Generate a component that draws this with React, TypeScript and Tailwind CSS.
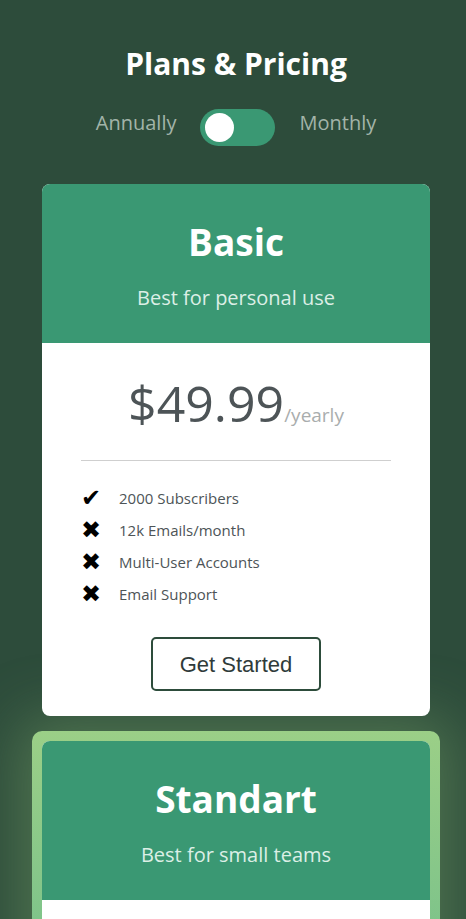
import { useState } from "react"

type Feature = { label: string; included: boolean }

const basicFeatures: Feature[] = [
  { label: "2000 Subscribers", included: true },
  { label: "12k Emails/month", included: false },
  { label: "Multi-User Accounts", included: false },
  { label: "Email Support", included: false },
]

function CardHeader({ name, tagline }: { name: string; tagline: string }) {
  return (
    <div className="flex h-[159px] flex-col items-center bg-[#3a9873] pt-[33px]">
      <h2 className="text-[37px] leading-[50px] font-bold text-white">{name}</h2>
      <p className="mt-[17px] text-[20px] leading-[28px] text-[#dcefe6]">{tagline}</p>
    </div>
  )
}

export default function App() {
  const [monthly, setMonthly] = useState(false)

  return (
    <div className="h-[919px] overflow-hidden bg-[#2d4c3b] pl-[6px] font-['Open_Sans',sans-serif]">
      <div className="flex flex-col items-center pt-[44px]">
        <h1 className="text-[30px] leading-[40px] font-bold text-white">Plans &amp; Pricing</h1>

        <div className="mt-[24px] flex items-center">
          <span className="mb-[8px] text-[20px] text-[#a3b4a9]">Annually</span>
          <button
            onClick={() => setMonthly((m) => !m)}
            className="mx-[24px] flex h-[37px] w-[75px] items-center rounded-full bg-[#3a9873] px-[5px]"
            aria-label="Toggle billing"
          >
            <span
              className={`h-[29px] w-[29px] rounded-full bg-white transition-transform ${
                monthly ? "translate-x-[36px]" : "translate-x-0"
              }`}
            />
          </button>
          <span className="mb-[8px] text-[20px] text-[#a3b4a9]">Monthly</span>
        </div>
      </div>

      <div className="mt-[38px] flex flex-col items-center">
        <div className="relative z-10 w-[388px] overflow-hidden rounded-[8px] bg-white">
          <CardHeader name="Basic" tagline="Best for personal use" />
          <div className="flex flex-col items-center pb-[25px]">
            <div className="mt-[29px] flex items-baseline text-[#4d5457]">
              <span className="text-[50px] leading-[62px]">$49.99</span>
              <span className="text-[19px] text-[#a9adad]">/yearly</span>
            </div>
            <div className="mt-[26px] h-px w-[310px] bg-[#cfcfcf]" />
            <ul className="mt-[26px] flex w-[310px] flex-col gap-[10px]">
              {basicFeatures.map((f) => (
                <li key={f.label} className="flex h-[22px] items-center">
                  <span className="w-[38px] font-['DejaVu_Sans',sans-serif] text-[24px] leading-none text-black">
                    {f.included ? "✔" : "✖"}
                  </span>
                  <span className="text-[15px] text-[#4d5457]">{f.label}</span>
                </li>
              ))}
            </ul>
            <button className="mt-[32px] h-[54px] w-[170px] rounded-[5px] border-2 border-[#2d4c3b] bg-white font-['Liberation_Sans',sans-serif] text-[22px] text-[#2f3b3a]">
              Get Started
            </button>
          </div>
        </div>

        <div className="mt-[15px] rounded-[10px] bg-gradient-to-b from-[#9bcf87] to-[#4fb38c] p-[10px] shadow-[0_0_60px_14px_rgba(130,175,110,0.4)]">
          <div className="w-[388px] overflow-hidden rounded-[8px] bg-white">
            <CardHeader name="Standart" tagline="Best for small teams" />
            <div className="h-[300px]" />
          </div>
        </div>
      </div>
    </div>
  )
}
